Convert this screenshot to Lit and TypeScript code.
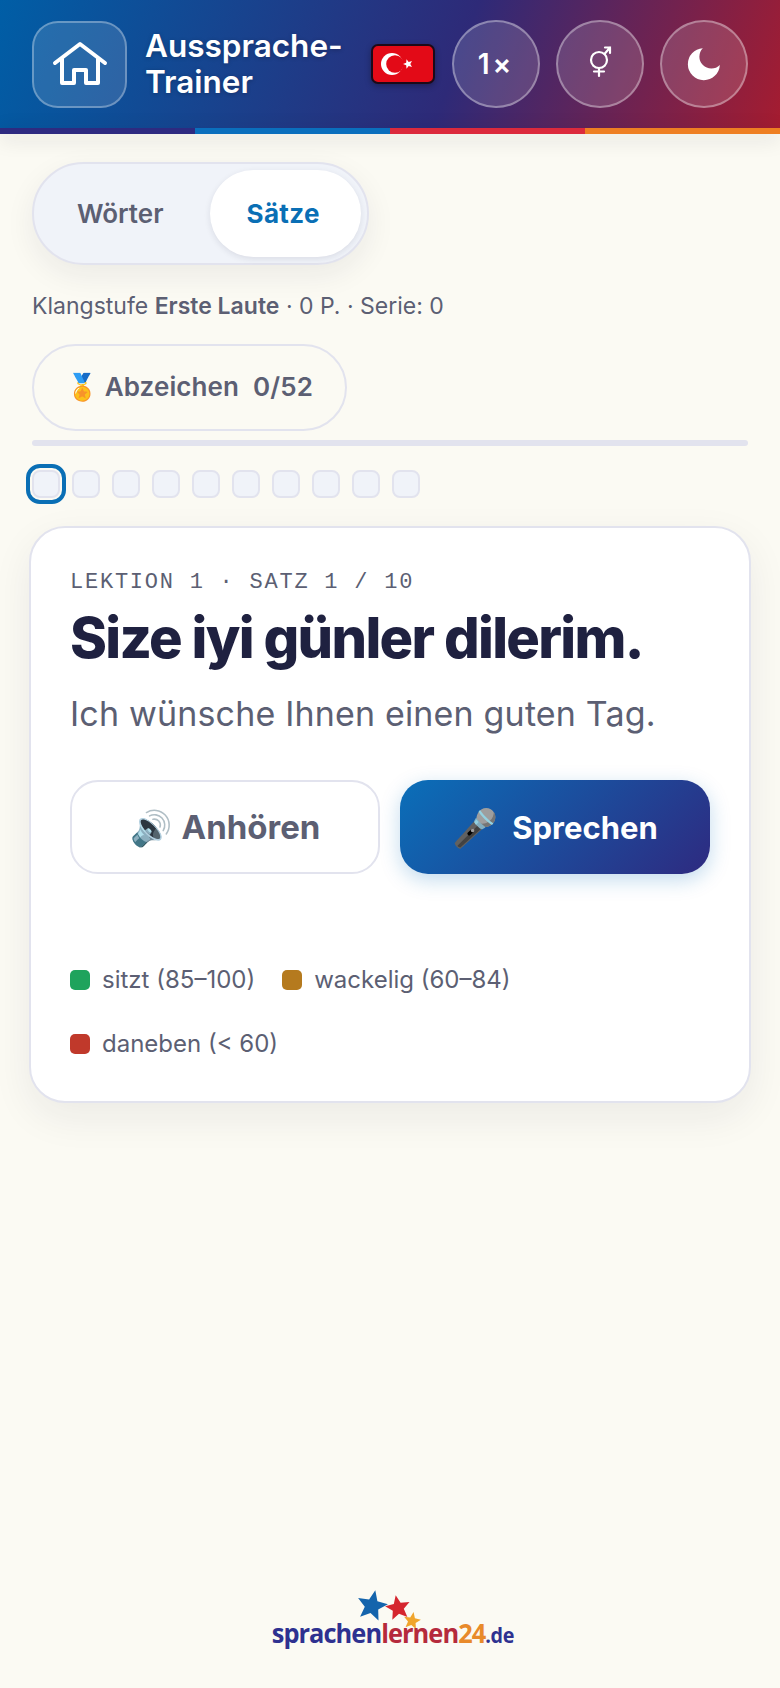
import { LitElement, html, css, svg } from 'lit';
import { customElement } from 'lit/decorators.js';

const SANS = css`Inter, 'Noto Sans', sans-serif`;

/** Five-pointed star as polygon points, used for the flag and the logo. */
function starPoints(cx: number, cy: number, r: number, rot: number): string {
  const pts: string[] = [];
  for (let i = 0; i < 10; i++) {
    const rad = i % 2 === 0 ? r : r * 0.45;
    const a = ((rot - 90 + i * 36) * Math.PI) / 180;
    pts.push(`${(cx + rad * Math.cos(a)).toFixed(1)},${(cy + rad * Math.sin(a)).toFixed(1)}`);
  }
  return pts.join(' ');
}

@customElement('app-root')
export class AppRoot extends LitElement {
  static styles = css`
    :host {
      display: block;
      font-family: ${SANS};
      color: #5c5f73;
    }
    .page {
      min-height: 1688px;
      background: #fbfaf3;
      display: flex;
      flex-direction: column;
      box-sizing: border-box;
    }
    .header {
      height: 128px;
      box-sizing: border-box;
      padding: 20px 32px;
      display: flex;
      align-items: center;
      background: linear-gradient(110deg, #005ea6 0%, #2e2a78 58%, #a51c30 100%);
    }
    .home {
      width: 95px;
      height: 87px;
      box-sizing: border-box;
      border: 2px solid rgba(255, 255, 255, 0.3);
      border-radius: 26px;
      background: rgba(255, 255, 255, 0.13);
      display: flex;
      align-items: center;
      justify-content: center;
      flex: none;
    }
    .title {
      margin-left: 18px;
      flex: 1;
      font-size: 31.5px;
      line-height: 36px;
      font-weight: 600;
      color: #fff;
      text-shadow: 0 1px 4px rgba(0, 0, 0, 0.25);
    }
    .flag {
      width: 64px;
      height: 40px;
      box-sizing: border-box;
      border: 2px solid #1c0a18;
      border-radius: 7px;
      background: #e30a17;
      box-shadow: 0 2px 6px rgba(0, 0, 0, 0.3);
      margin-right: 17px;
      flex: none;
      display: block;
    }
    .round {
      width: 88px;
      height: 88px;
      box-sizing: border-box;
      border: 2px solid rgba(255, 255, 255, 0.35);
      border-radius: 50%;
      background: rgba(255, 255, 255, 0.14);
      color: #fff;
      display: flex;
      align-items: center;
      justify-content: center;
      margin-left: 16px;
      flex: none;
      font-size: 28px;
      font-weight: 600;
      letter-spacing: 3px;
    }
    .flag + .round {
      margin-left: 0;
    }
    .strip {
      display: grid;
      grid-template-columns: repeat(4, 1fr);
      height: 6px;
      box-shadow: 0 4px 20px rgba(30, 30, 40, 0.18);
    }
    .strip i:nth-child(1) { background: #2e2a80; }
    .strip i:nth-child(2) { background: #0a6fbd; }
    .strip i:nth-child(3) { background: #dc2a3c; }
    .strip i:nth-child(4) { background: #ee7f22; }

    .main {
      padding: 28px 32px 0;
      display: flex;
      flex-direction: column;
      align-items: flex-start;
    }
    .toggle {
      display: flex;
      gap: 9px;
      box-sizing: border-box;
      height: 103px;
      padding: 6px;
      border: 2px solid #e2e3ee;
      border-radius: 52px;
      background: #f0f3f9;
      box-shadow: 0 10px 30px rgba(30, 30, 60, 0.07);
    }
    .toggle span {
      display: flex;
      align-items: center;
      padding: 0 38px 0 37px;
      border-radius: 44px;
      font-size: 26px;
      font-weight: 600;
    }
    .toggle .on {
      padding: 0 41px 0 36px;
      background: #fff;
      color: #0a6fb5;
      font-weight: 700;
      letter-spacing: 0.015em;
      box-shadow: 0 2px 6px rgba(30, 30, 60, 0.1);
    }
    .status {
      margin-top: 26px;
      font-size: 23px;
      line-height: 30px;
    }
    .status b {
      font-weight: 600;
    }
    .badges {
      margin-top: 23px;
      height: 87px;
      box-sizing: border-box;
      padding: 0 32px 2px;
      border: 2px solid #e2e3ee;
      border-radius: 44px;
      display: flex;
      align-items: center;
      gap: 14px;
      font-size: 26px;
      font-weight: 600;
      letter-spacing: 0.1px;
    }
    .progress {
      align-self: stretch;
      height: 6px;
      margin-top: 9px;
      border-radius: 3px;
      background: #e2e3ee;
    }
    .dots {
      display: flex;
      gap: 12px;
      margin-top: 24px;
    }
    .dots i {
      width: 28px;
      height: 28px;
      box-sizing: border-box;
      border: 2px solid #e2e3ee;
      border-radius: 8px;
      background: #f0f3f9;
    }
    .dots i.cur {
      outline: 4px solid #0a6fb5;
      outline-offset: 2px;
    }
    .card {
      align-self: stretch;
      margin: 28px -3px 0;
      box-sizing: border-box;
      padding: 42px 39px 42px;
      background: #fff;
      border: 2px solid #e2e3ee;
      border-radius: 36px;
      box-shadow: 0 14px 40px rgba(30, 30, 60, 0.07);
    }
    .eyebrow {
      font-family: 'Liberation Mono', monospace;
      font-size: 22px;
      line-height: 26px;
      letter-spacing: 0.08em;
      color: #5c5f73;
    }
    h1 {
      margin: 10px 0 0;
      font-size: 56px;
      line-height: 64px;
      font-weight: 800;
      letter-spacing: -0.03em;
      color: #1f2140;
    }
    .trans {
      margin-top: 22px;
      font-size: 34px;
      line-height: 44px;
      letter-spacing: 0.005em;
    }
    .actions {
      display: grid;
      grid-template-columns: 1fr 1fr;
      gap: 20px;
      margin-top: 44px;
    }
    .btn {
      height: 94px;
      box-sizing: border-box;
      border-radius: 28px;
      display: flex;
      align-items: center;
      justify-content: center;
      font-weight: 700;
    }
    .btn.ghost {
      gap: 10px;
      font-size: 33px;
      border: 2px solid #e2e3ee;
      background: #fff;
    }
    .btn.primary {
      gap: 14px;
      font-size: 31px;
      color: #fff;
      background: linear-gradient(135deg, #0a6fb9, #2e2a80);
      box-shadow: 0 6px 20px rgba(10, 111, 189, 0.25);
    }
    .btn .em {
      font-size: 34px;
    }
    .btn.primary .em {
      font-size: 37px;
    }
    .legend {
      display: flex;
      flex-wrap: wrap;
      gap: 34px 27px;
      margin-top: 91px;
    }
    .legend div {
      display: flex;
      align-items: center;
      gap: 12px;
      font-size: 24px;
      line-height: 30px;
    }
    .legend i {
      width: 20px;
      height: 20px;
      border-radius: 5px;
    }
    .footer {
      margin-top: auto;
      padding-bottom: 34px;
      display: flex;
      flex-direction: column;
      align-items: center;
    }
    .stars {
      display: block;
      margin-bottom: -16px;
      position: relative;
    }
    .logo {
      margin-left: 6px;
      font-family: 'Open Sans', sans-serif;
      font-weight: 700;
      font-size: 27px;
      line-height: 38px;
      letter-spacing: -1px;
      color: #2e3190;
      transform: scaleX(0.94);
    }
    .logo .r { color: #b52a3c; }
    .logo .o { color: #e88a2a; }
    .logo small { font-size: 21px; letter-spacing: -0.4px; }
  `;

  render() {
    return html`
      <div class="page">
        <header class="header">
          <div class="home">
            <svg width="60" height="50" viewBox="0 0 60 50" fill="none" stroke="#fff" stroke-width="4" stroke-linecap="round" stroke-linejoin="round">
              <path d="M5 24 L30 5 L55 24" />
              <path d="M12 20 V44 H24 V31 H36 V44 H48 V20" />
            </svg>
          </div>
          <div class="title">Aussprache-<br />Trainer</div>
          <svg class="flag" viewBox="0 0 60 36">
            <circle cx="19" cy="18" r="11" fill="#fff" />
            <circle cx="22" cy="18" r="8.8" fill="#e30a17" />
            <polygon points=${starPoints(35, 18, 5, -90)} fill="#fff" />
          </svg>
          <div class="round">1×</div>
          <div class="round">
            <svg width="32" height="38" viewBox="0 0 32 38" fill="none" stroke="#fff" stroke-width="2.2" stroke-linecap="round">
              <circle cx="15" cy="15" r="8" />
              <path d="M15 23 V31 M10 26.5 H20 M20.5 9 L26 2.5 M21 2.5 H26 V8" />
            </svg>
          </div>
          <div class="round">
            <svg width="40" height="40" viewBox="0 0 24 24" fill="#fff"><path d="M21.5 12.6A9.6 9.6 0 1 1 11.3 2.5 6.4 6.4 0 0 0 21.5 12.6z" /></svg>
          </div>
        </header>
        <div class="strip"><i></i><i></i><i></i><i></i></div>

        <main class="main">
          <div class="toggle">
            <span>Wörter</span>
            <span class="on">Sätze</span>
          </div>
          <div class="status">Klangstufe <b>Erste Laute</b> · 0 P. · Serie: 0</div>
          <div class="badges"><span>🏅 Abzeichen</span><span>0/52</span></div>
          <div class="progress"></div>
          <div class="dots">
            <i class="cur"></i><i></i><i></i><i></i><i></i><i></i><i></i><i></i><i></i><i></i>
          </div>

          <section class="card">
            <div class="eyebrow">LEKTION 1 · SATZ 1 / 10</div>
            <h1>Size iyi günler dilerim.</h1>
            <div class="trans">Ich wünsche Ihnen einen guten Tag.</div>
            <div class="actions">
              <div class="btn ghost"><span class="em">🔊</span><span>Anhören</span></div>
              <div class="btn primary"><span class="em">🎤</span><span>Sprechen</span></div>
            </div>
            <div class="legend">
              <div><i style="background:#1fa35c"></i>sitzt (85–100)</div>
              <div><i style="background:#b57a1e"></i>wackelig (60–84)</div>
              <div><i style="background:#c0392b"></i>daneben (&lt; 60)</div>
            </div>
          </section>
        </main>

        <footer class="footer">
          <svg class="stars" width="100" height="46" viewBox="0 0 100 46">
            ${svg`<polygon points=${starPoints(32, 22, 16, 12)} fill="#1464ac" />
            <polygon points=${starPoints(58, 24, 13, -10)} fill="#d5262e" />
            <polygon points=${starPoints(72, 37, 9, 10)} fill="#f0a52c" />`}
          </svg>
          <div class="logo">sprachen<span class="r">lernen</span><span class="o">24</span><small>.de</small></div>
        </footer>
      </div>
    `;
  }
}

declare global {
  interface HTMLElementTagNameMap {
    'app-root': AppRoot;
  }
}
